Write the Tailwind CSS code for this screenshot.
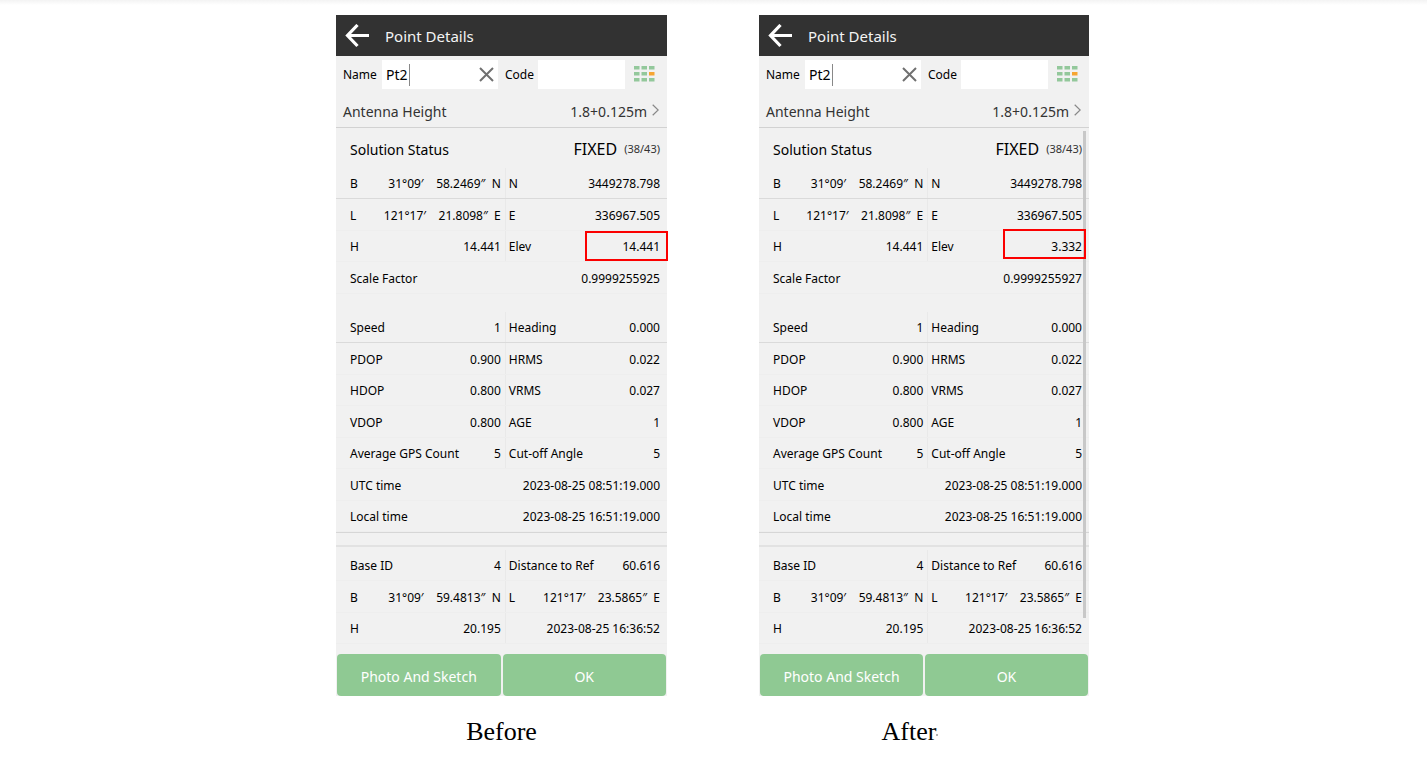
<!DOCTYPE html>
<html lang="en">

<head>
    <meta charset="UTF-8">
    <meta name="viewport" content="width=device-width, initial-scale=1.0">
    <title>Point Details</title>
    <script src="https://cdn.jsdelivr.net/npm/@tailwindcss/browser@4"></script>
</head>

<body class="min-h-screen bg-white font-['Noto_Sans',sans-serif] text-black">

    <div class="h-[5px] bg-linear-to-b from-[#f3f3f3] to-white"></div>

    <main id="compare" class="flex flex-wrap justify-center gap-x-[92px] gap-y-8 pt-[10px] pr-[2px]"></main>

    <script>
        // One list of rows per block. [label, value] fills the row, two pairs split it.
        function blocks(elev, scale) {
            return [
                [
                    [['B', '31°09′ &nbsp; &nbsp;58.2469″ &nbsp;N'], ['N', '3449278.798']],
                    [['L', '121°17′ &nbsp; &nbsp;21.8098″ &nbsp;E'], ['E', '336967.505']],
                    [['H', '14.441'], ['Elev', elev]],
                    [['Scale Factor', scale]]
                ],
                [
                    [['Speed', '1'], ['Heading', '0.000']],
                    [['PDOP', '0.900'], ['HRMS', '0.022']],
                    [['HDOP', '0.800'], ['VRMS', '0.027']],
                    [['VDOP', '0.800'], ['AGE', '1']],
                    [['Average GPS Count', '5'], ['Cut-off Angle', '5']],
                    [['UTC time', '2023-08-25 08:51:19.000']],
                    [['Local time', '2023-08-25 16:51:19.000']]
                ],
                [
                    [['Base ID', '4'], ['Distance to Ref', '60.616']],
                    [['B', '31°09′ &nbsp; &nbsp;59.4813″ &nbsp;N'], ['L', '121°17′ &nbsp; &nbsp;23.5865″ &nbsp;E']],
                    [['H', '20.195'], ['', '2023-08-25 16:36:52']]
                ]
            ];
        }

        function row(cells, mark) {
            if (cells.length === 1) {
                return `<div class="flex h-8 items-center justify-between border-b border-[#eeeeee] pt-0.5 pr-[7px] pl-[14px] odd:h-[31px]">
                    <dt>${cells[0][0]}</dt><dd>${cells[0][1]}</dd></div>`;
            }
            const [a, b] = cells;
            const box = b[0] === 'Elev' ? `<span class="absolute ${mark} z-10 h-[30px] w-[83px] border-2 border-[#fb0000]"></span>` : '';
            const line = a[0] === 'Base ID' ? 'border-[#eeeeee]' : 'border-[#eeeeee] first:border-[#dadada]';
            return `<div class="flex h-8 border-b ${line} odd:h-[31px]">
                <div class="flex w-[51%] items-center justify-between pt-0.5 pr-1 pl-[14px]"><dt>${a[0]}</dt><dd>${a[1]}</dd></div>
                <div class="relative flex flex-1 items-center justify-between border-l border-[#e9e9e9] pt-0.5 pr-[7px] pl-[3px]"><dt>${b[0]}</dt><dd>${b[1]}</dd>${box}</div>
            </div>`;
        }

        function panel(p) {
            const [first, second, third] = blocks(p.elev, p.scale).map(b => b.map(r => row(r, p.mark)).join(''));
            return `
            <figure class="${p.width}">
                <section class="relative bg-[#f1f1f1]">
                    <header class="flex h-[41px] items-center gap-[14px] bg-[#323232] pl-[9px] text-[#f4f4f4]">
                        <button type="button" aria-label="Back">
                            <svg class="h-6 w-[26px]" viewBox="0 0 26 24" fill="none" stroke="white" stroke-width="3.2"><path d="M12.500 1 2.500 11.500l10 10.500M2.500 11.500H24"/></svg>
                        </button>
                        <h1 class="pt-0.5 text-[15px]">Point Details</h1>
                    </header>

                    <div class="flex h-[37px] items-center pl-[7px] text-[12px]">
                        <label for="name-${p.id}" class="w-[39px] pt-px">Name</label>
                        <div class="relative">
                            <input id="name-${p.id}" type="text" value="Pt2" class="block h-[29px] w-[116px] bg-white pl-1 text-[14px] outline-none">
                            <span class="absolute top-1 left-[27px] h-[22px] w-px bg-[#888]"></span>
                            <button type="button" aria-label="Clear" class="absolute top-[7px] right-1">
                                <svg class="size-[15px]" viewBox="0 0 15 15" fill="none" stroke="#707070" stroke-width="2"><path d="M1 1l13 13M14 1 1 14"/></svg>
                            </button>
                        </div>
                        <label for="code-${p.id}" class="w-[40px] pt-px pl-[7px]">Code</label>
                        <input id="code-${p.id}" type="text" class="block h-[29px] w-[87px] bg-white px-1 outline-none">
                        <button type="button" aria-label="Code list" class="ml-[9px]">
                            <svg class="h-[17px] w-[21px]" viewBox="0 0 21 17" fill="#93c89b">
                                <path d="M0 0h5.500v3.500H0zM7.500 0H13v3.500H7.500zM15 0h5.500v3.500H15zM0 6h5.500v3.500H0zM7.500 6H13v3.500H7.500zM0 12h5.500v3.500H0zM7.500 12H13v3.500H7.500zM15 12h5.500v3.500H15z"/>
                                <path fill="#f6a532" d="M15 6h5.500v3.500H15z"/>
                            </svg>
                        </button>
                    </div>

                    <a href="#antenna" class="flex h-[35px] items-center border-b border-[#d2d2d2] pr-2 pl-[7px] text-[14px] text-[#333]">
                        <span class="flex-1 pt-0.5">Antenna Height</span>
                        <span class="pt-0.5">1.8+0.125m</span>
                        <svg class="ml-[5px] h-3 w-[7px]" viewBox="0 0 7 12" fill="none" stroke="#888" stroke-width="1.200"><path d="M.7.7 6.200 6 .7 11.300"/></svg>
                    </a>

                    <div class="flex h-[40px] items-center pt-0.5 pr-[7px] pl-[14px]">
                        <span class="flex-1 text-[14px]">Solution Status</span>
                        <span class="text-[16px]">FIXED</span>
                        <span class="ml-[7px] text-[11px] text-[#333]">(38/43)</span>
                    </div>

                    <dl class="text-[12px]">${first}</dl>
                    <dl class="mt-[18px] border-b border-[#d6d6d6] text-[12px]">${second}</dl>
                    <dl class="mt-3 border-t-2 border-[#e2e2e2] pt-[3px] text-[12px]">${third}</dl>

                    <div class="grid grid-cols-2 gap-0.5 bg-[#f1f1f1] px-px pt-[10px]">
                        <button type="button" class="h-[42px] rounded-[4px] bg-[#8fc993] pt-0.5 text-[14px] text-white">Photo And Sketch</button>
                        <button type="button" class="h-[42px] rounded-[4px] bg-[#8fc993] pt-0.5 text-[14px] text-white">OK</button>
                    </div>
                    ${p.scroll ? '<span class="absolute top-[116px] right-[3px] h-[487px] w-[3px] bg-[#c8c8c8]"></span>' : ''}
                </section>
                <figcaption class="pt-4 text-center font-['Liberation_Serif',serif] text-[26px] leading-10 ${p.caption}">${p.title}</figcaption>
            </figure>`;
        }

        document.getElementById('compare').innerHTML =
            panel({ id: 'before', width: 'w-[331px]', title: 'Before', elev: '14.441', scale: '0.9999255925', mark: 'top-0 -right-px', caption: '', scroll: false }) +
            panel({ id: 'after', width: 'w-[330px]', title: 'After<span class="mb-1 inline-block size-0.5 rounded-full bg-[#999]"></span>', elev: '3.332', scale: '0.9999255927', mark: '-top-0.5 right-[3px]', caption: 'pr-[28px]', scroll: true });
    </script>

</body>

</html>
